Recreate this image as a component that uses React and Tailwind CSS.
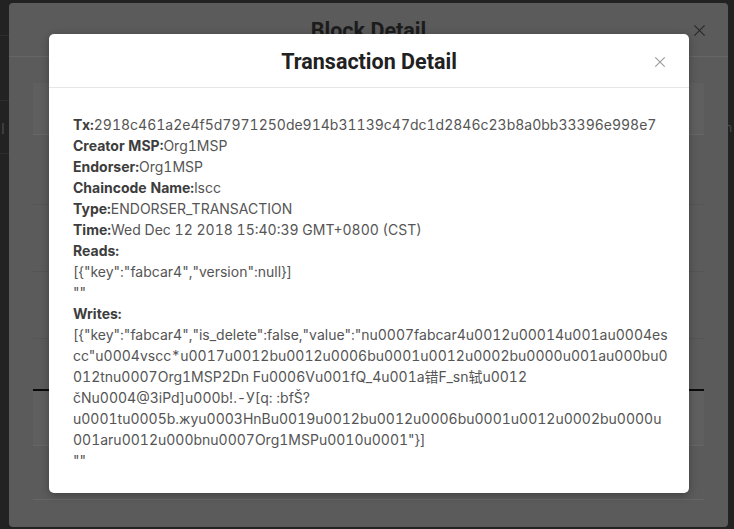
import React from "react";

const lines = [
  { label: "Tx:", value: "2918c461a2e4f5d7971250de914b31139c47dc1d2846c23b8a0bb33396e998e7" },
  { label: "Creator MSP:", value: "Org1MSP" },
  { label: "Endorser:", value: "Org1MSP" },
  { label: "Chaincode Name:", value: "lscc" },
  { label: "Type:", value: "ENDORSER_TRANSACTION" },
  { label: "Time:", value: "Wed Dec 12 2018 15:40:39 GMT+0800 (CST)" },
  { label: "Reads:", value: "" },
  { label: "", value: '[{"key":"fabcar4","version":null}]' },
  { label: "", value: '""' },
  { label: "Writes:", value: "" },
  { label: "", value: '[{"key":"fabcar4","is_delete":false,"value":"nu0007fabcar4u0012u00014u001au0004es' },
  { label: "", value: 'cc"u0004vscc*u0017u0012bu0012u0006bu0001u0012u0002bu0000u001au000bu0' },
  { label: "", value: "012tnu0007Org1MSP2Dn Fu0006Vu001fQ_4u001a错F_sn轼u0012" },
  { label: "", value: "čNu0004@3iPd]u000b!.-У[q: :bfŠ?" },
  { label: "", value: "u0001tu0005b.жyu0003HnBu0019u0012bu0012u0006bu0001u0012u0002bu0000u" },
  { label: "", value: '001aru0012u000bnu0007Org1MSPu0010u0001"}]' },
  { label: "", value: '""' },
];

function CloseX({ className }) {
  return (
    <svg viewBox="0 0 14 14" className={className} fill="none" stroke="currentColor" strokeWidth="1.3">
      <path d="M1.5 1.5 L12.5 12.5 M12.5 1.5 L1.5 12.5" />
    </svg>
  );
}

export default function App() {
  return (
    <div
      className="relative w-[734px] h-[529px] overflow-hidden bg-[#222222]"
      style={{ fontFamily: "Inter, 'Noto Sans', 'Noto Sans CJK SC', sans-serif" }}
    >
      {/* underlying page, barely visible at the edges */}
      <div className="absolute left-0 top-[35px] w-[9px] border-t border-[#2c2c2c]"></div>
      <div className="absolute left-0 top-[100px] w-[9px] border-t border-[#2c2c2c]"></div>
      <div className="absolute left-0 top-[153px] w-[9px] border-t border-[#2c2c2c]"></div>
      <span className="absolute left-[1px] top-[118px] text-[14px] text-[#4a4a4a]">I</span>
      <span className="absolute left-[725px] top-[119px] text-[12px] text-[#4a4a4a]">n</span>

      {/* Dimmed Block Detail modal */}
      <div className="absolute left-[9px] top-[3px] w-[719px] h-[524px] rounded-[4px] bg-[#5b5b5b] flex flex-col">
        <div className="relative h-[54px] shrink-0 flex items-center justify-center border-b border-[#666666]">
          <span className="text-[21.5px] font-bold text-[#1c1c1c] font-['Roboto'] translate-y-[2px]">Block Detail</span>
          <CloseX className="absolute right-[22px] top-[21px] w-[13px] h-[13px] text-[#2a2a2a]" />
        </div>
        <div className="flex flex-col px-[24px] pt-[26px]">
          <div className="h-[52px] bg-[#5f5f5f] border-b border-[#666666]"></div>
          <div className="h-[70px] border-b border-[#555555]"></div>
          <div className="h-[67px] border-b border-[#555555]"></div>
          <div className="h-[67px] border-b border-[#555555]"></div>
          <div className="h-[52px] border-b-2 border-[#0a0a0a]"></div>
          <div className="h-[55px] bg-[#5f5f5f] border-b border-[#666666]"></div>
          <div className="h-[54px] border-b border-[#666666]"></div>
        </div>
      </div>

      {/* Transaction Detail modal */}
      <div className="absolute left-[49px] top-[34px] w-[640px] h-[459px] rounded-[5px] bg-white flex flex-col shadow-[0_2px_8px_rgba(0,0,0,0.3)]">
        <div className="relative h-[54px] shrink-0 flex items-center justify-center border-b border-[#e6e6e6]">
          <span className="text-[21.5px] font-bold text-[#212121] font-['Roboto'] translate-y-[2px]">Transaction Detail</span>
          <CloseX className="absolute right-[23px] top-[22px] w-[12px] h-[12px] text-[#9a9a9a]" />
        </div>
        <div className="px-[24px] pt-[26px] text-[14px] leading-[21px] tabular-nums text-[#555555]">
          {lines.map((l, i) => (
            <div key={i} className="whitespace-nowrap">
              {l.label && <span className="font-bold text-[#3d3d3d]">{l.label}</span>}
              {l.value}
            </div>
          ))}
        </div>
      </div>
    </div>
  );
}
